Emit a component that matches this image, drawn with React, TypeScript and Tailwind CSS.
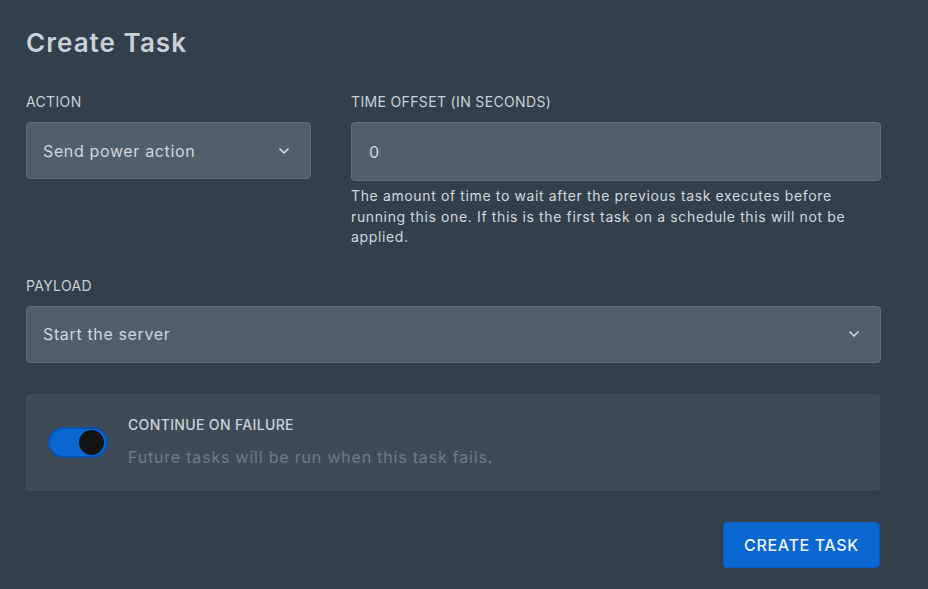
import { ChevronDown } from 'lucide-react';

function Label({ children }: { children: React.ReactNode }) {
  return <p className="text-[14px] leading-5 tracking-[0.025em] text-[#cad1d8] uppercase mb-[10px]">{children}</p>;
}

function FakeSelect({ value, className = '' }: { value: string; className?: string }) {
  return (
    <div
      className={`flex items-center justify-between h-[57px] rounded-[4px] border border-[#5f6c79] bg-[#515e6b] pl-4 pr-[18px] ${className}`}
    >
      <span className="text-[16px] tracking-[0.04em] text-[#cfd6dd]">{value}</span>
      <ChevronDown className="h-4 w-4 text-[#d4dbe2]" strokeWidth={2.5} />
    </div>
  );
}

export default function App() {
  return (
    <div
      className="min-h-[589px] w-full bg-[#333f4b] pl-[26px] pt-[27px] pb-5"
      style={{ fontFamily: 'Inter, "Noto Sans", sans-serif' }}
    >
      <div className="w-[855px]">
        <h2 className="text-[26px] font-semibold leading-8 tracking-[0.04em] text-[#cad1d8] mb-[33px]">Create Task</h2>

        <div className="flex gap-10">
          <div className="w-[285px] shrink-0">
            <Label>Action</Label>
            <FakeSelect value="Send power action" />
          </div>
          <div className="flex-1">
            <Label>Time offset (in seconds)</Label>
            <div className="flex items-center h-[59px] rounded-[4px] border border-[#5f6c79] bg-[#515e6b] px-[17px]">
              <span className="text-[16px] text-[#cfd6dd]">0</span>
            </div>
            <p className="mt-[5px] text-[14px] leading-[20.5px] tracking-[0.045em] text-[#d3d9df]">
              The amount of time to wait after the previous task executes before running this one. If this is the first task on a schedule this will not be applied.
            </p>
          </div>
        </div>

        <div className="mt-[28px]">
          <Label>Payload</Label>
          <FakeSelect value="Start the server" />
        </div>

        <div className="mt-[31px] flex items-start rounded-[4px] bg-[#3f4a56] pl-[22px] pt-[21px] h-[97px] w-[854px]">
          <div className="mt-[12px] flex h-[31px] w-[60px] items-center justify-end rounded-full border-2 border-[#0b52b0] bg-[#0967d2] pr-[2px]">
            <div className="h-[25px] w-[25px] rounded-full bg-[#131313]" />
          </div>
          <div className="ml-[20px]">
            <p className="text-[14px] leading-5 font-medium tracking-[0.025em] text-[#cbd2d9] uppercase">Continue on failure</p>
            <p className="mt-[12px] text-[16px] leading-5 tracking-[0.05em] text-[#6e7b88]">Future tasks will be run when this task fails.</p>
          </div>
        </div>

        <div className="mt-[31px] flex justify-end pr-px">
          <button className="h-[46px] w-[157px] rounded-[4px] border border-[#0b5cc0] bg-[#0967d2] text-[16px] font-medium uppercase tracking-[0.04em] text-[#eef4fb]">
            Create Task
          </button>
        </div>
      </div>
    </div>
  );
}
